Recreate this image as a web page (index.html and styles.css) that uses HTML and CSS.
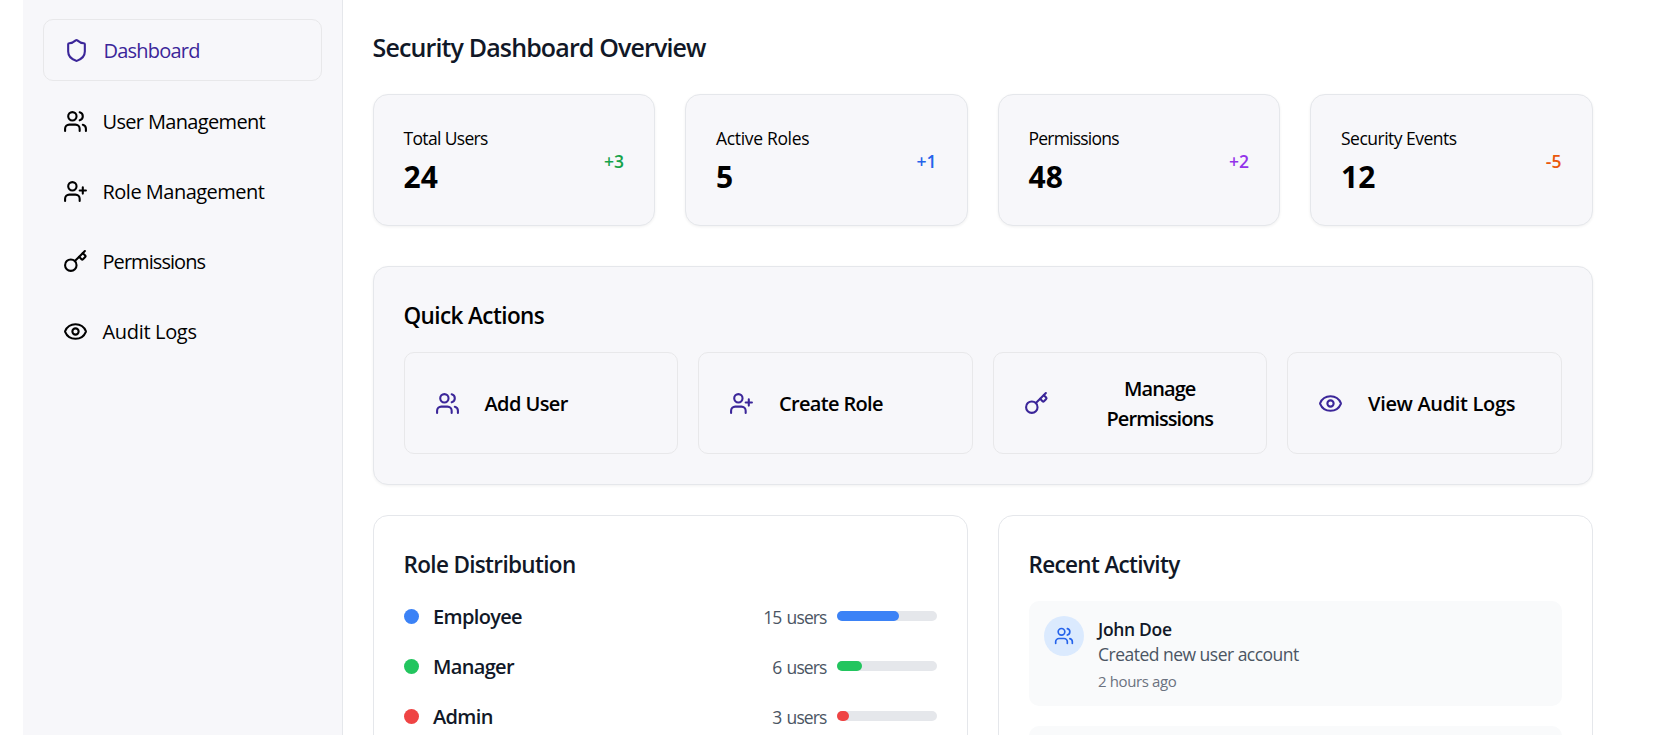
FILE: index.html
```html
<!DOCTYPE html>
<html lang="en">
<head>
<meta charset="utf-8">
<title>Security Dashboard</title>
<link rel="stylesheet" href="styles.css">
</head>
<body>
<svg class="sprite" aria-hidden="true">
  <symbol id="shield" viewBox="0 0 24 24"><path d="M20 13c0 5-3.5 7.5-7.66 8.95a1 1 0 0 1-.67-.01C7.5 20.5 4 18 4 13V6a1 1 0 0 1 1-1c2 0 4.5-1.2 6.24-2.72a1.17 1.17 0 0 1 1.52 0C14.51 3.81 17 5 19 5a1 1 0 0 1 1 1z"/></symbol>
  <symbol id="users" viewBox="0 0 24 24"><path d="M16 21v-2a4 4 0 0 0-4-4H6a4 4 0 0 0-4 4v2"/><circle cx="9" cy="7" r="4"/><path d="M22 21v-2a4 4 0 0 0-3-3.87"/><path d="M16 3.13a4 4 0 0 1 0 7.75"/></symbol>
  <symbol id="user-plus" viewBox="0 0 24 24"><path d="M16 21v-2a4 4 0 0 0-4-4H6a4 4 0 0 0-4 4v2"/><circle cx="9" cy="7" r="4"/><path d="M19 8v6M22 11h-6"/></symbol>
  <symbol id="key" viewBox="0 0 24 24"><path d="m15.5 7.5 2.3 2.3a1 1 0 0 0 1.4 0l2.1-2.1a1 1 0 0 0 0-1.4L19 4"/><path d="m21 2-9.6 9.6"/><circle cx="7.5" cy="15.5" r="5.5"/></symbol>
  <symbol id="eye" viewBox="0 0 24 24"><path d="M2.062 12.348a1 1 0 0 1 0-.696 10.75 10.75 0 0 1 19.876 0 1 1 0 0 1 0 .696 10.75 10.75 0 0 1-19.876 0"/><circle cx="12" cy="12" r="3"/></symbol>
</svg>
<div class="layout">
  <nav class="sidebar">
    <a class="nav-item active"><svg class="icon"><use href="#shield"/></svg><span class="t8">Dashboard</span></a>
    <a class="nav-item"><svg class="icon"><use href="#users"/></svg><span class="t7">User Management</span></a>
    <a class="nav-item"><svg class="icon"><use href="#user-plus"/></svg><span class="t5">Role Management</span></a>
    <a class="nav-item"><svg class="icon"><use href="#key"/></svg><span class="t9">Permissions</span></a>
    <a class="nav-item"><svg class="icon"><use href="#eye"/></svg><span class="t3">Audit Logs</span></a>
  </nav>
  <main class="main">
    <h1 class="title">Security Dashboard Overview</h1>
    <section class="stats">
      <div class="stat"><div><p class="stat-label t7">Total Users</p><p class="stat-value">24</p></div><span class="delta green">+3</span></div>
      <div class="stat"><div><p class="stat-label t3">Active Roles</p><p class="stat-value">5</p></div><span class="delta blue">+1</span></div>
      <div class="stat"><div><p class="stat-label t8">Permissions</p><p class="stat-value">48</p></div><span class="delta purple">+2</span></div>
      <div class="stat"><div><p class="stat-label t5">Security Events</p><p class="stat-value">12</p></div><span class="delta orange">-5</span></div>
    </section>
    <section class="card quick">
      <h2 class="t6">Quick Actions</h2>
      <div class="actions">
        <button class="action"><svg class="icon"><use href="#users"/></svg><span class="t6">Add User</span></button>
        <button class="action"><svg class="icon"><use href="#user-plus"/></svg><span class="t7">Create Role</span></button>
        <button class="action"><svg class="icon"><use href="#key"/></svg><span class="t9">Manage Permissions</span></button>
        <button class="action"><svg class="icon"><use href="#eye"/></svg><span class="t3">View Audit Logs</span></button>
      </div>
    </section>
    <div class="panels">
      <section class="card">
        <h2 class="t7">Role Distribution</h2>
        <div class="roles">
          <div class="role"><i class="dot bg-blue"></i><span class="role-name t7">Employee</span><span class="count">15 users</span><div class="bar"><div class="fill bg-blue" style="width:62.5%"></div></div></div>
          <div class="role"><i class="dot bg-green"></i><span class="role-name t7">Manager</span><span class="count">6 users</span><div class="bar"><div class="fill bg-green" style="width:25%"></div></div></div>
          <div class="role"><i class="dot bg-red"></i><span class="role-name t7">Admin</span><span class="count">3 users</span><div class="bar"><div class="fill bg-red" style="width:12.5%"></div></div></div>
        </div>
      </section>
      <section class="card">
        <h2 class="t7">Recent Activity</h2>
        <div class="feed">
          <div class="event">
            <div class="avatar"><svg class="icon"><use href="#users"/></svg></div>
            <div class="detail"><p class="who t3">John Doe</p><p class="what t5">Created new user account</p><p class="when t4">2 hours ago</p></div>
          </div>
          <div class="event"></div>
        </div>
      </section>
    </div>
  </main>
</div>
</body>
</html>
```
FILE: styles.css
```css
* { box-sizing: border-box; margin: 0; padding: 0; }
body {
  height: 735px;
  overflow: hidden;
  background: #fff;
  color: #000;
  font: 400 20px/30px "Segoe UI", "Open Sans", "Noto Sans", sans-serif;
}
.sprite { display: none; }
.icon {
  flex: none;
  width: 25px;
  height: 25px;
  fill: none;
  stroke: currentColor;
  stroke-width: 2;
  stroke-linecap: round;
  stroke-linejoin: round;
}

.t3 { letter-spacing: -.33px; }
.t4 { letter-spacing: -.39px; }
.t5 { letter-spacing: -.51px; }
.t6 { letter-spacing: -.6px; }
.t7 { letter-spacing: -.66px; }
.t8 { letter-spacing: -.78px; }
.t9 { letter-spacing: -.94px; }

.layout { display: flex; height: 735px; padding-left: 23px; overflow: hidden; }
.sidebar {
  display: flex;
  flex: none;
  flex-direction: column;
  gap: 10px;
  width: 320px;
  padding: 19px 20px;
  background: #f7f7fa;
  border-right: 1px solid #e5e7eb;
}
.nav-item { display: flex; align-items: center; gap: 14.5px; height: 60px; padding: 0 20px; white-space: nowrap; }
.nav-item span { padding-top: 2px; }
.nav-item.active { height: 62px; border: 1px solid #e8e8ea; border-radius: 10px; color: #3b2699; }

.main { flex: none; width: 1249.5px; padding: 30px 0 0 29.5px; }
.title { height: 64px; font-size: 25px; font-weight: 550; line-height: 35px; letter-spacing: -.86px; color: #111827; }

.stats { display: grid; grid-template-columns: repeat(4, 1fr); gap: 30px; margin-bottom: 40px; }
.stat {
  display: flex;
  align-items: center;
  justify-content: space-between;
  height: 132px;
  padding: 0 30px;
  background: #f7f7fa;
  border: 1px solid #e5e7eb;
  border-radius: 15px;
  box-shadow: 0 1px 3px rgba(0, 0, 0, .06);
}
.stat-label { padding-top: 2px; font-size: 17.5px; line-height: 25px; }
.stat-value { margin-top: 6px; font-size: 30px; font-weight: 700; line-height: 40px; }
.delta { padding-top: 3px; font-size: 17.5px; font-weight: 550; line-height: 25px; }
.green { color: #16a34a; }
.blue { color: #2563eb; }
.purple { color: #9333ea; }
.orange { color: #ea580c; }

.card { padding: 30px; border: 1px solid #e5e7eb; border-radius: 15px; }
.card h2 { height: 35px; font-size: 22.5px; font-weight: 550; line-height: 37px; }
.quick { height: 219px; margin-bottom: 30px; background: #f7f7fa; box-shadow: 0 1px 3px rgba(0, 0, 0, .06); }
.actions { display: grid; grid-template-columns: repeat(4, 1fr); gap: 20px; margin-top: 20px; }
.action {
  display: flex;
  align-items: center;
  gap: 25px;
  height: 102px;
  padding: 0 20px 0 30px;
  background: none;
  border: 1px solid #e8e8ea;
  border-radius: 10px;
  font: inherit;
  font-weight: 550;
  color: #000;
}
.action span { padding-top: 2px; }
.action .icon { color: #3b2699; }

.panels { display: grid; grid-template-columns: 1fr 1fr; gap: 30px; }
.panels .card { height: 420px; color: #111827; }
.roles { display: flex; flex-direction: column; gap: 20px; margin-top: 20px; }
.role { display: flex; align-items: center; height: 30px; }
.dot { width: 15px; height: 15px; margin-right: 14.5px; border-radius: 50%; }
.role-name { flex: 1; padding-top: 2px; font-weight: 550; }
.count { margin-right: 10px; padding-top: 2px; font-size: 17.5px; letter-spacing: -.9px; word-spacing: 1.5px; color: #4b5563; }
.bar { width: 100px; height: 10px; background: #e5e7eb; border-radius: 5px; }
.fill { height: 10px; border-radius: 5px; }
.bg-blue { background: #3b82f6; }
.bg-green { background: #22c55e; }
.bg-red { background: #ef4444; }

.feed { display: flex; flex-direction: column; gap: 20px; margin-top: 20px; }
.event { display: flex; gap: 14.5px; height: 105px; padding: 15px; background: #f9fafb; border-radius: 10px; }
.avatar {
  display: flex;
  flex: none;
  align-items: center;
  justify-content: center;
  width: 40px;
  height: 40px;
  background: #dbeafe;
  border-radius: 50%;
  color: #2563eb;
}
.avatar .icon { width: 20px; height: 20px; }
.detail { padding-top: 1px; }
.who { font-size: 17.5px; font-weight: 550; line-height: 25px; }
.what { font-size: 17.5px; line-height: 25px; color: #4b5563; }
.when { margin-top: 4px; font-size: 15px; line-height: 20px; color: #6b7280; }
```
